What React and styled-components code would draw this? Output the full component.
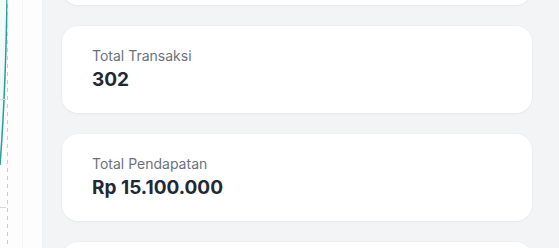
import React from "react";
import styled, { createGlobalStyle } from "styled-components";

const Global = createGlobalStyle`
  html, body { margin: 0; padding: 0; }
  body {
    width: 559px;
    height: 248px;
    overflow: hidden;
    font-family: Inter, "Noto Sans", sans-serif;
    background: #f3f4f6;
  }
`;

const Page = styled.div`
  display: flex;
  width: 559px;
  height: 248px;
  overflow: hidden;
`;

const Strip = styled.div`
  width: 43px;
  flex: 0 0 43px;
  height: 248px;
  background: #fdfdfe;
  position: relative;
  border-right: 1px solid #eef0f2;
  box-sizing: border-box;
`;

const Main = styled.main`
  flex: 1;
  background: #f3f4f6;
  padding: 0 27px 0 19px;
  overflow: hidden;
`;

const List = styled.div`
  display: flex;
  flex-direction: column;
  gap: 21px;
  margin-top: -82px;
`;

const Card = styled.section`
  background: #ffffff;
  border-radius: 16px;
  padding: 20px 30px 19px;
  box-shadow: 0 1px 3px rgba(15, 23, 42, 0.04), 0 0 0 1px rgba(15, 23, 42, 0.015);
  display: flex;
  flex-direction: column;
`;

const Label = styled.div`
  font-size: 14px;
  line-height: 20px;
  color: #6b7280;
  font-weight: 400;
`;

const Value = styled.div`
  font-size: 19px;
  line-height: 28px;
  color: #1f2937;
  font-weight: 700;
`;

const stats = [
  { label: "Total Pelanggan", value: "120" },
  { label: "Total Transaksi", value: "302" },
  { label: "Total Pendapatan", value: "Rp 15.100.000" },
  { label: "Rata-rata Transaksi", value: "Rp 50.000" },
];

function ChartEdge() {
  return (
    <svg width="43" height="248" viewBox="0 0 43 248" style={{ position: "absolute", left: 0, top: 0 }}>
      <defs>
        <linearGradient id="area" x1="0" y1="0" x2="0" y2="1">
          <stop offset="0" stopColor="#14b8a6" stopOpacity="0.04" />
          <stop offset="1" stopColor="#67e8f9" stopOpacity="0.14" />
        </linearGradient>
      </defs>
      <path d="M0 0 L7 0 Q5.5 95 0 165 L0 248 Z" fill="url(#area)" />
      <path d="M7 0 Q5.5 95 0 165" fill="none" stroke="#2a9d96" strokeWidth="1.5" />
      <line x1="7.5" y1="0" x2="7.5" y2="248" stroke="#c9ced6" strokeWidth="1" strokeDasharray="4 4" />
      <line x1="0" y1="99.5" x2="6" y2="99.5" stroke="#d5d9df" strokeWidth="1" />
      <line x1="0" y1="207.5" x2="6" y2="207.5" stroke="#d5d9df" strokeWidth="1" />
      <line x1="22.5" y1="0" x2="22.5" y2="248" stroke="#f4f5f7" strokeWidth="1" />
    </svg>
  );
}

export default function App() {
  return (
    <>
      <Global />
      <Page>
        <Strip>
          <ChartEdge />
        </Strip>
        <Main>
          <List>
            {stats.map((s) => (
              <Card key={s.label}>
                <Label>{s.label}</Label>
                <Value>{s.value}</Value>
              </Card>
            ))}
          </List>
        </Main>
      </Page>
    </>
  );
}
